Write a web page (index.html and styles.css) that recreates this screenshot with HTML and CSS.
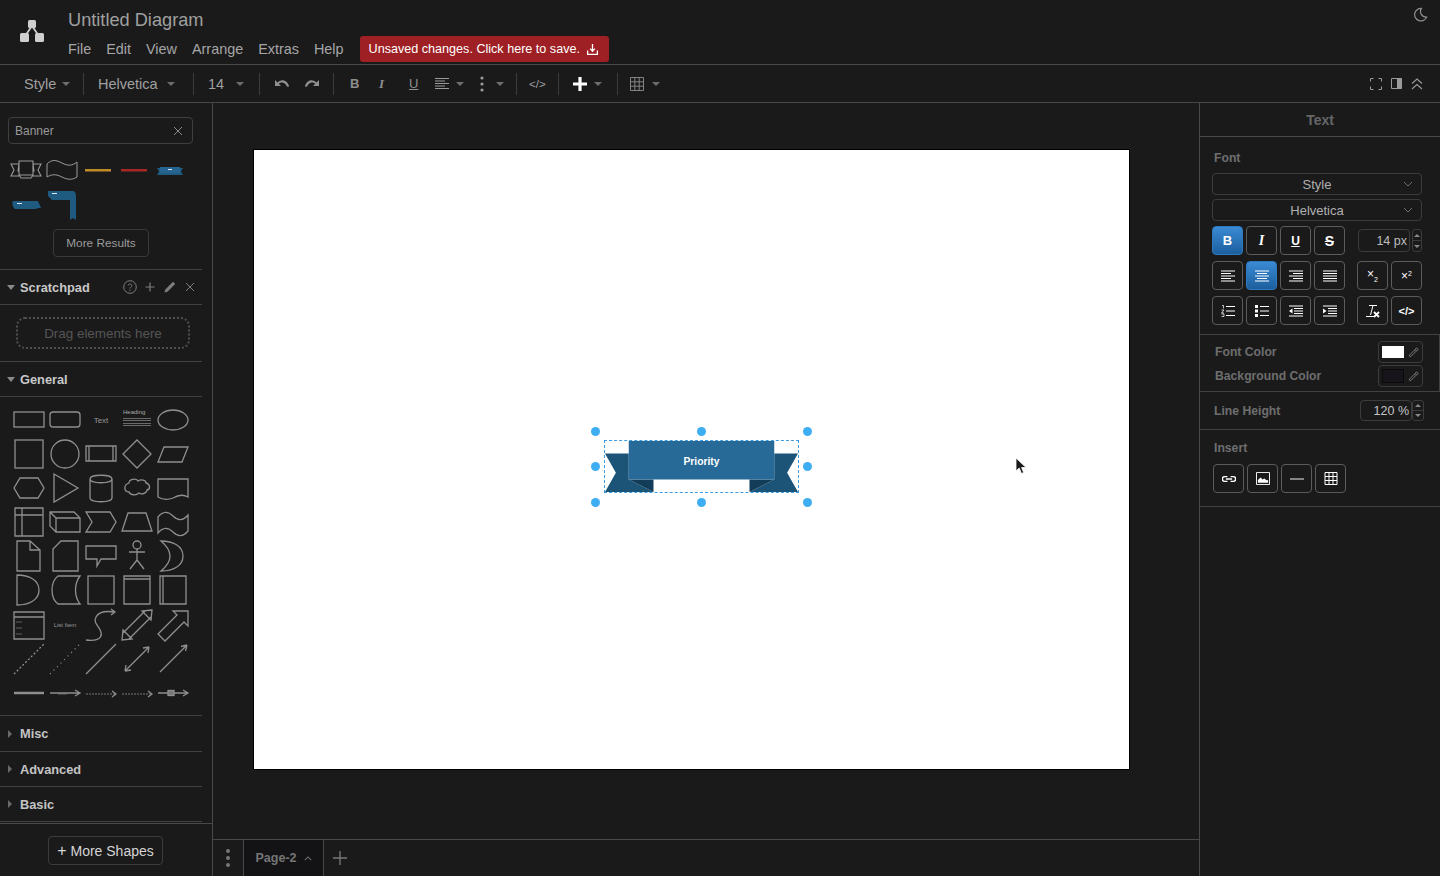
FILE: index.html
```html
<!DOCTYPE html>
<html lang="en">
<head>
<meta charset="utf-8">
<title>Untitled Diagram</title>
<link rel="stylesheet" href="styles.css">
</head>
<body>
<header class="header">
  <svg class="logo" viewBox="0 0 24 22"><path d="M12 6 5 16M12 6l7 10" stroke="#cfcfcf" stroke-width="1.800" fill="none"/><rect x="8" y="0" width="8" height="8" rx="1.500" fill="#cfcfcf"/><rect x="0" y="13" width="9" height="9" rx="1.500" fill="#cfcfcf"/><rect x="15" y="13" width="9" height="9" rx="1.500" fill="#cfcfcf"/></svg>
  <div class="head-main">
    <div class="title">Untitled Diagram</div>
    <div class="menu-row">
      <nav class="menu"><span>File</span><span>Edit</span><span>View</span><span>Arrange</span><span>Extras</span><span>Help</span></nav>
      <button class="save">Unsaved changes. Click here to save.
        <svg viewBox="0 0 12 12" class="save-ico"><path d="M6 1v6.500M3.800 5.200 6 7.600 8.200 5.200M1.500 7v3.500h9V7" fill="none" stroke="#fff" stroke-width="1.200"/></svg>
      </button>
    </div>
  </div>
  <svg class="moon" viewBox="0 0 16 16"><path d="M9 1.500a6.700 6.700 0 1 0 5.600 9.300A6 6 0 0 1 9 1.500Z" fill="none" stroke="#8d8d8d" stroke-width="1.300"/></svg>
</header>

<div class="toolbar">
  <span class="tb w-style">Style<i class="caret"></i></span><b class="sep"></b>
  <span class="tb w-font">Helvetica<i class="caret"></i></span><b class="sep"></b>
  <span class="tb w-size">14<i class="caret"></i></span><b class="sep"></b>
  <span class="tb w-undo">
    <svg class="ic" viewBox="0 0 16 16"><path d="M1 4v6h6L4.800 7.800C7.500 5.500 11 6.500 13 10.500c1 .5 1.500.5 2-.5C13.500 4.500 8 2 3.500 6.500z" fill="#8f8f8f"/></svg>
    <svg class="ic" viewBox="0 0 16 16"><path transform="matrix(-1 0 0 1 16 0)" d="M1 4v6h6L4.800 7.800C7.500 5.500 11 6.500 13 10.500c1 .5 1.500.5 2-.5C13.500 4.500 8 2 3.500 6.500z" fill="#8f8f8f"/></svg>
  </span><b class="sep"></b>
  <span class="tb w-fmt">
    <span class="f-b">B</span><span class="f-i">I</span><span class="f-u">U</span>
    <svg class="ic" viewBox="0 0 16 16"><path d="M1 2.500h14M1 5h10M1 7.500h14M1 10h10M1 12.500h14" stroke="#9a9a9a"/></svg><i class="caret c6"></i>
    <svg class="ic dots" viewBox="0 0 16 16"><circle cx="8" cy="2" r="1.600" fill="#9a9a9a"/><circle cx="8" cy="8" r="1.600" fill="#9a9a9a"/><circle cx="8" cy="14" r="1.600" fill="#9a9a9a"/></svg><i class="caret c6"></i>
  </span><b class="sep"></b>
  <span class="tb w-code">&lt;/&gt;</span><b class="sep"></b>
  <span class="tb w-add"><svg class="ic" viewBox="0 0 16 16"><path d="M8 1v14M1 8h14" stroke="#fff" stroke-width="3.200"/></svg><i class="caret"></i></span><b class="sep"></b>
  <span class="tb w-table"><svg class="ic" viewBox="0 0 14 14"><path d="M.5.500h13v13H.5zM.5 4.800h13M.5 9.200h13M4.800.5v13M9.200.5v13" fill="none" stroke="#8f8f8f" stroke-width=".9"/></svg><i class="caret c8"></i></span>
  <span class="tb-right">
    <svg class="ic13 full" viewBox="0 0 12 12"><path d="M.5 3.500V.5h3M8.500.5h3v3M11.500 8.500v3h-3M3.500 11.500h-3v-3" fill="none" stroke="#9a9a9a" stroke-width="1"/></svg>
    <svg class="ic13 split" viewBox="0 0 11 11"><path d="M.5.500h10v10H.5z" fill="none" stroke="#9a9a9a"/><rect x="6" y=".5" width="4.500" height="10" fill="#9a9a9a"/></svg>
    <svg class="ic13 coll" viewBox="0 0 12 12"><path d="M1 5.500 6 1l5 4.500M1 11l5-4.500 5 4.500" fill="none" stroke="#9a9a9a" stroke-width="1.100"/></svg>
  </span>
</div>

<div class="work">
  <aside class="side">
    <div class="side-scroll">
      <div class="search">Banner<svg class="x" viewBox="0 0 10 10"><path d="M1 1l8 8M9 1 1 9" stroke="#8a8a8a" stroke-width="1"/></svg></div>
      <div class="results">
        <svg class="res" viewBox="0 0 32 24"><path d="M1 6h8l-1 7h1v5H1l3-6zM31 6h-8l1 7h-1v5h8l-3-6zM9 3h14v14H9zM9 17l2 3h10l2-3" fill="none" stroke="#9a9a9a" stroke-width="1.100"/></svg>
        <svg class="res" viewBox="0 0 32 24"><path d="M1 6c5-5 9-4 15-1s10 3 15-1v15c-5 3-9 3-15 0s-10-3-15 0z" fill="none" stroke="#9a9a9a"/></svg>
        <svg class="res" viewBox="0 0 32 24"><rect x="3" y="11" width="26" height="2.500" fill="#c28a24"/></svg>
        <svg class="res" viewBox="0 0 32 24"><rect x="3" y="11" width="26" height="2.500" fill="#a52824"/></svg>
        <svg class="res" viewBox="0 0 32 24"><path d="M3 10h26l-2 3.500 2 3.500H3l2-3.500z" fill="#1f5a80"/><rect x="6" y="9" width="20" height="6" fill="#25658f"/><rect x="14" y="11" width="4" height="1" fill="#dfe8ee"/></svg>
        <svg class="res" viewBox="0 0 32 24"><path d="M3 9h25l3 7-3 0-2 1H6C2 17 2 9 3 9Z" fill="#1f5a80"/><rect x="7" y="11" width="5" height="1" fill="#dfe8ee"/></svg>
        <svg class="res tall" viewBox="0 0 32 32"><path d="M2 1h24c3 0 4 2 4 5v24l-3-2-3 2V10H6L2 6Z" fill="#1f5a80"/><rect x="6" y="3" width="5" height="1" fill="#dfe8ee"/></svg>
      </div>
      <button class="more-res">More Results</button>
      <div class="sec sec-open"><i class="tri"></i>Scratchpad
        <span class="sec-ic">
          <svg viewBox="0 0 14 14"><circle cx="7" cy="7" r="6.300" fill="none" stroke="#7d7d7d"/><path d="M5.200 5.500C5.200 3.500 8.800 3.500 8.800 5.500 8.800 7 7 7 7 8.500M7 9.800v1.200" fill="none" stroke="#7d7d7d"/></svg>
          <svg viewBox="0 0 14 14"><path d="M7 2.500v9M2.500 7h9" stroke="#7d7d7d" stroke-width="1.200"/></svg>
          <svg viewBox="0 0 14 14"><path d="M1.500 12.500l.8-3L10 1.800l2.200 2.200-7.700 7.700z" fill="#7d7d7d"/></svg>
          <svg viewBox="0 0 14 14"><path d="M3 3l8 8M11 3l-8 8" stroke="#7d7d7d"/></svg>
        </span>
      </div>
      <div class="drop-wrap"><div class="drop">Drag elements here</div></div>
      <div class="sec sec-open sec-general"><i class="tri"></i>General</div>
      <div class="shapes">
        <svg viewBox="0 0 36 36"><rect x="3" y="10" width="30" height="15"/></svg>
        <svg viewBox="0 0 36 36"><rect x="3" y="10" width="30" height="15" rx="3"/></svg>
        <span class="t-text">Text</span>
        <span class="t-head"><b>Heading</b><i></i><i></i><i></i><i></i></span>
        <svg viewBox="0 0 36 36"><ellipse cx="18" cy="18" rx="15" ry="10"/></svg>

        <svg viewBox="0 0 36 36"><rect x="4" y="4" width="28" height="28"/></svg>
        <svg viewBox="0 0 36 36"><circle cx="18" cy="18" r="14"/></svg>
        <svg viewBox="0 0 36 36"><path d="M3 10h30v15H3zM6 10v15M30 10v15"/></svg>
        <svg viewBox="0 0 36 36"><path d="M18 4l14 14-14 14L4 18z"/></svg>
        <svg viewBox="0 0 36 36"><path d="M9 11h24l-6 15H3z"/></svg>

        <svg viewBox="0 0 36 36"><path d="M9 8h18l6 10-6 10H9L3 18z"/></svg>
        <svg viewBox="0 0 36 36"><path d="M7 4l24 14L7 32z"/></svg>
        <svg viewBox="0 0 36 36"><path d="M7 9v19c0 5 22 5 22 0V9c0-5-22-5-22 0 0 5 22 5 22 0"/></svg>
        <svg viewBox="0 0 36 36"><path d="M10 13c0-4 7-5 9-2 3-2 8-1 8 2 4 1 5 6 1 7 0 3-5 5-8 3-3 3-9 2-10-1-5 0-6-7 0-9z"/></svg>
        <svg viewBox="0 0 36 36"><path d="M3 9h30v18c-5-3-10-2-15 1-5 2-10 2-15-1z"/></svg>

        <svg viewBox="0 0 36 36"><path d="M4 4h28v28H4zM4 11h28M11 4v28"/></svg>
        <svg viewBox="0 0 36 36"><path d="M3 8h24l6 6v14H9l-6-6zM3 8l6 6h24M9 14v14"/></svg>
        <svg viewBox="0 0 36 36"><path d="M3 8h24l6 10-6 10H3l6-10z"/></svg>
        <svg viewBox="0 0 36 36"><path d="M9 9h18l6 18H3z"/></svg>
        <svg viewBox="0 0 36 36"><path d="M3 13c5-6 10-6 15-1s10 5 15-1v16c-5 6-10 6-15 1S8 23 3 29z"/></svg>

        <svg viewBox="0 0 36 36"><path d="M6 3h13l10 9v21H6zM19 3v9h10"/></svg>
        <svg viewBox="0 0 36 36"><path d="M14 3h17v30H6V11z"/></svg>
        <svg viewBox="0 0 36 36"><path d="M3 8h30v13H18l-4 7v-7H3z"/></svg>
        <svg viewBox="0 0 36 36"><circle cx="18" cy="7" r="4"/><path d="M18 11v11M10 14h16M18 22l-7 9M18 22l7 9"/></svg>
        <svg viewBox="0 0 36 36"><path d="M6 3c12 0 22 5 22 15S18 33 6 33c6-5 9-10 9-15S12 8 6 3z"/></svg>

        <svg viewBox="0 0 36 36"><path d="M6 3c12 0 22 5 22 15S18 33 6 33z"/></svg>
        <svg viewBox="0 0 36 36"><path d="M11 4h22c-6 8-6 20 0 28H11C3 26 3 10 11 4z"/></svg>
        <svg viewBox="0 0 36 36"><rect x="5" y="4" width="26" height="28"/></svg>
        <svg viewBox="0 0 36 36"><path d="M5 4h26v28H5zM5 7h26"/></svg>
        <svg viewBox="0 0 36 36"><path d="M5 4h26v28H5zM8 4v28"/></svg>

        <svg viewBox="0 0 36 36"><path d="M3 5h30v27H3zM3 10h30"/><path class="fine" d="M5 15h6M5 21h6M5 27h6"/></svg>
        <span class="t-list">List Item</span>
        <svg viewBox="0 0 36 36"><path d="M3 33c8 1 17 0 15-8-2-6-8-9-5-15 3-6 12-6 19-5M28 2l4 3-4 3"/></svg>
        <svg viewBox="0 0 36 36"><path d="M4 26 26 4M10 32 32 10M3 33l1-10 9 9zM33 3l-10 1 9 9z"/></svg>
        <svg viewBox="0 0 36 36"><path d="M3 27 22 8l-4-4h15v15l-4-4L10 34z"/></svg>

        <svg viewBox="0 0 36 36"><path class="dash" d="M3 33 33 3"/></svg>
        <svg viewBox="0 0 36 36"><path class="dot" d="M3 33 33 3"/></svg>
        <svg viewBox="0 0 36 36"><path d="M3 33 33 3"/></svg>
        <svg viewBox="0 0 36 36"><path d="M6 30 30 6M30 6l-6 1M30 6l-1 6M6 30l6-1M6 30l1-6"/></svg>
        <svg viewBox="0 0 36 36"><path d="M5 31 32 4M32 4l-6 1.500M32 4l-1.500 6"/></svg>

        <svg viewBox="0 0 36 36"><path class="thick" d="M3 18h30"/></svg>
        <svg viewBox="0 0 36 36"><path d="M3 18h29M28 15l5 3-5 3"/><path class="fine" d="M11 19h9"/></svg>
        <svg viewBox="0 0 36 36"><path class="fine2" d="M3 19h29"/><path d="M29 16l4 3-4 3"/></svg>
        <svg viewBox="0 0 36 36"><path class="fine2" d="M3 19h29"/><path d="M29 16l4 3-4 3"/></svg>
        <svg viewBox="0 0 36 36"><path d="M3 18h29M28 15l5 3-5 3"/><rect class="fill" x="13" y="15.500" width="6" height="5"/></svg>
      </div>
      <div class="sec sec-closed sec-misc"><i class="tri-r"></i>Misc</div>
      <div class="sec sec-closed"><i class="tri-r"></i>Advanced</div>
      <div class="sec sec-closed"><i class="tri-r"></i>Basic</div>
    </div>
    <div class="side-foot"><button class="more-shapes"><span class="plus">+</span> More Shapes</button></div>
  </aside>

  <main class="stage">
    <div class="canvas-area">
      <div class="paper">
        <div class="sel">
          <div class="banner">
            <svg class="ban-svg" viewBox="0 0 195 53" preserveAspectRatio="none">
              <path d="M0 13h24v27l25 13H0l11-20z" fill="#1c5478"/>
              <path d="M195 13h-24v27l-25 13h49l-11-20z" fill="#1c5478"/>
              <path d="M24 40h25v13z" fill="#123c58"/>
              <path d="M171 40h-25v13z" fill="#123c58"/>
              <rect x="24" y="0" width="147" height="40" fill="#286a97"/>
            </svg>
            <span class="ban-text">Priority</span>
          </div>
          <i class="h h1"></i><i class="h h2"></i><i class="h h3"></i><i class="h h4"></i><i class="h h5"></i><i class="h h6"></i><i class="h h7"></i><i class="h h8"></i>
        </div>
        <svg class="cursor" viewBox="0 0 14 18"><path d="M2 1v13l3.200-3 2.300 5.500 2.200-1L7.500 10.500H12z" fill="#1a1a1a" stroke="#fff" stroke-width=".8"/></svg>
      </div>
    </div>
    <div class="pagebar">
      <span class="pb-opt"><svg viewBox="0 0 6 20" class="pb-dots"><circle cx="3" cy="3" r="2" fill="#777"/><circle cx="3" cy="10" r="2" fill="#777"/><circle cx="3" cy="17" r="2" fill="#777"/></svg></span>
      <span class="pb-page">Page-2 <svg viewBox="0 0 10 6" class="pb-car"><path d="M1 5l4-4 4 4" fill="none" stroke="#6f6f6f" stroke-width="1.300"/></svg></span>
      <span class="pb-add"><svg viewBox="0 0 14 14"><path d="M7 0v14M0 7h14" stroke="#7a7a7a" stroke-width="1.300"/></svg></span>
    </div>
  </main>

  <aside class="panel">
    <div class="panel-tab">Text</div>
    <div class="pn-sec pn-font">
      <div class="pn-label">Font</div>
      <div class="sel-box">Style<svg viewBox="0 0 10 6" class="chev"><path d="M1 1l4 4 4-4" fill="none" stroke="#6e6e6e"/></svg></div>
      <div class="sel-box">Helvetica<svg viewBox="0 0 10 6" class="chev"><path d="M1 1l4 4 4-4" fill="none" stroke="#6e6e6e"/></svg></div>
      <div class="btn-row">
        <div class="btn-group">
          <span class="bt on"><b class="g-b">B</b></span>
          <span class="bt"><i class="g-i">I</i></span>
          <span class="bt"><span class="g-u">U</span></span>
          <span class="bt"><span class="g-s">S</span></span>
        </div>
        <div class="spin-wrap spin-a"><span class="spin">14 px</span><span class="spin-btns"><i class="up"></i><i class="dn"></i></span></div>
      </div>
      <div class="btn-row">
        <div class="btn-group">
          <span class="bt"><svg viewBox="0 0 14 12"><path d="M0 1h14M0 3.500h10M0 6h14M0 8.500h10M0 11h14" stroke="#fff"/></svg></span>
          <span class="bt on"><svg viewBox="0 0 14 12"><path d="M0 1h14M2 3.500h10M0 6h14M2 8.500h10M0 11h14" stroke="#fff"/></svg></span>
          <span class="bt"><svg viewBox="0 0 14 12"><path d="M0 1h14M4 3.500h10M0 6h14M4 8.500h10M0 11h14" stroke="#fff"/></svg></span>
          <span class="bt"><svg viewBox="0 0 14 12"><path d="M0 1h14M0 3.500h14M0 6h14M0 8.500h14M0 11h14" stroke="#fff"/></svg></span>
        </div>
        <div class="btn-group">
          <span class="bt"><span class="g-sub">×<small>2</small></span></span>
          <span class="bt"><span class="g-sub">×<sup>2</sup></span></span>
        </div>
      </div>
      <div class="btn-row">
        <div class="btn-group">
          <span class="bt"><svg viewBox="0 0 14 12"><path d="M5 1.500h9M5 6h9M5 10.500h9" stroke="#fff"/><path d="M1 .5h1.500v3M.5 5h2.500L.5 8h2.500M.5 9h2.500v2.500H.5" fill="none" stroke="#fff" stroke-width=".7"/></svg></span>
          <span class="bt"><svg viewBox="0 0 14 12"><path d="M5 1.500h9M5 6h9M5 10.500h9" stroke="#fff"/><path d="M0 0h3v3H0zM0 4.500h3v3H0zM0 9h3v3H0z" fill="#fff"/></svg></span>
          <span class="bt"><svg viewBox="0 0 14 12"><path d="M0 1h14M5 3.500h9M5 6h9M5 8.500h9M0 11h14" stroke="#fff"/><path d="M3.500 3.500v5L0 6z" fill="#fff"/></svg></span>
          <span class="bt"><svg viewBox="0 0 14 12"><path d="M0 1h14M5 3.500h9M5 6h9M5 8.500h9M0 11h14" stroke="#fff"/><path d="M0 3.500v5L3.500 6z" fill="#fff"/></svg></span>
        </div>
        <div class="btn-group">
          <span class="bt"><svg class="clear" viewBox="0 0 16 14"><path d="M4 1.500h8M8 1.500 5.500 11M1 12.500h8" stroke="#fff" fill="none"/><path d="M9 8l5 5M14 8l-5 5" stroke="#fff" stroke-width="1.800"/></svg></span>
          <span class="bt g-code">&lt;/&gt;</span>
        </div>
      </div>
    </div>
    <div class="pn-sec pn-color">
      <div class="color-row"><span>Font Color</span><span class="swatch"><i class="sw-w"></i><svg viewBox="0 0 12 12"><path d="M2 10.500 1.500 9 7 3.500 8.500 5 3 10.500zM7.500 2.500l2-1.500 1.500 1.500-1.500 2z" fill="none" stroke="#9a9a9a" stroke-width=".8"/></svg></span></div>
      <div class="color-row"><span>Background Color</span><span class="swatch"><i class="sw-d"></i><svg viewBox="0 0 12 12"><path d="M2 10.500 1.500 9 7 3.500 8.500 5 3 10.500zM7.500 2.500l2-1.500 1.500 1.500-1.500 2z" fill="none" stroke="#9a9a9a" stroke-width=".8"/></svg></span></div>
    </div>
    <div class="pn-sec pn-line">
      <span class="pn-label">Line Height</span>
      <div class="spin-wrap spin-b"><span class="spin">120 %</span><span class="spin-btns"><i class="up"></i><i class="dn"></i></span></div>
    </div>
    <div class="pn-sec pn-insert">
      <div class="pn-label">Insert</div>
      <div class="btn-group ins">
        <span class="bt"><svg viewBox="0 0 18 10"><path d="M7 2H3.500a3 3 0 0 0 0 6H7M11 2h3.500a3 3 0 0 1 0 6H11M5 5h8" fill="none" stroke="#fff" stroke-width="1.800"/></svg></span>
        <span class="bt"><svg class="pic" viewBox="0 0 15 14"><path d="M.5.500h14v13H.5z" fill="none" stroke="#fff"/><path d="M2 11.500v-3L5 6l2 2 2-1 2 1.500 2 .5v2.500z" fill="#fff"/></svg></span>
        <span class="bt"><svg viewBox="0 0 15 2" class="hr"><path d="M0 1h15" stroke="#fff"/></svg></span>
        <span class="bt"><svg class="pic" viewBox="0 0 13 13"><path d="M.5.500h12v12H.5zM.5 4.500h12M.5 8.500h12M4.500.5v12M8.500.5v12" fill="none" stroke="#fff"/></svg></span>
      </div>
    </div>
  </aside>
</div>
</body>
</html>
```
FILE: styles.css
```css
* { box-sizing: border-box; }
html, body { margin: 0; height: 100%; }
body {
  width: 1440px; height: 876px; overflow: hidden;
  background: #1a1a1b; color: #a8a8a8;
  font-family: "Liberation Sans", Arial, sans-serif; font-size: 13px;
  display: flex; flex-direction: column;
}
button { font-family: inherit; }

.header { height: 65px; border-bottom: 1px solid #484848; display: flex; flex: none; }
.logo { width: 24px; height: 22px; margin: 20px 0 0 20px; flex: none; }
.head-main { margin-left: 24px; flex: 1; }
.title { font-size: 18.200px; color: #a0a0a0; padding-top: 9px; line-height: 22px; }
.menu-row { display: flex; align-items: center; margin-top: 5px; }
.menu { display: flex; gap: 15px; font-size: 14.400px; color: #a6a6a6; }
.save {
  margin-left: 16px; height: 26px; width: 249px; padding: 0 0 0 9px; flex: none;
  background: #9e1f24; color: #fff; border: 0; border-radius: 3px;
  font-size: 12.600px; display: flex; align-items: center; gap: 6px; white-space: nowrap;
}
.save-ico { width: 13px; height: 13px; }
.moon { width: 15px; height: 15px; margin: 7px 12px 0 0; flex: none; }

.toolbar { height: 38px; flex: none; border-bottom: 1px solid #484848; display: flex; align-items: center; padding-left: 24px; color: #a0a0a0; font-size: 14.500px; }
.tb { display: flex; align-items: center; }
.sep { width: 1px; height: 22px; background: #3c3c3c; flex: none; }
.caret { width: 0; height: 0; border: 4px solid transparent; border-top: 4px solid #6d6d6d; border-bottom: 0; margin-left: 6px; flex: none; }
.c6 { margin-left: 6px; }
.c8 { margin-left: 8px; }
.ic { width: 16px; height: 16px; flex: none; }
.w-style { width: 59px; }
.w-font { width: 109px; padding-left: 14px; }
.w-font .caret { margin-left: 9px; }
.w-size { width: 65px; padding-left: 14px; }
.w-size .caret { margin-left: 12px; }
.w-undo { width: 73px; padding-left: 14px; gap: 14px; }
.w-fmt { width: 182px; padding-left: 16px; font-size: 13px; color: #8e8e8e; }
.f-b { font-weight: bold; width: 29px; }
.f-i { font-family: "Liberation Serif", serif; font-style: italic; font-weight: bold; width: 30px; }
.f-u { text-decoration: underline; width: 25px; }
.dots { margin-left: 10px; }
.w-code { width: 41px; padding-left: 12px; font-size: 11.500px; }
.w-add { width: 58px; padding-left: 13px; }
.w-add .caret { margin-left: 6px; }
.w-table { padding-left: 12px; }
.w-table .ic { width: 14px; height: 14px; }
.tb-right { margin-left: auto; display: flex; align-items: center; margin-right: 17px; }
.full { width: 12px; height: 12px; }
.split { width: 11px; height: 11px; margin-left: 9px; }
.coll { width: 12px; height: 12px; margin-left: 9px; }

.work { flex: 1; display: flex; min-height: 0; }
.side { width: 213px; flex: none; border-right: 1px solid #484848; display: flex; flex-direction: column; }
.side-scroll { flex: 1; width: 202px; min-height: 0; }
.search {
  margin: 14px 0 0 8px; width: 185px; height: 27px; border: 1px solid #3f3f3f; border-radius: 4px;
  padding: 0 6px; display: flex; align-items: center; justify-content: space-between; font-size: 12px; color: #999;
}
.x { width: 10px; height: 10px; margin-right: 3px; }
.results { display: grid; grid-template-columns: repeat(5, 32px); column-gap: 4px; row-gap: 10px; grid-auto-rows: 24px; margin: 14px 0 0 10px; height: 71px; }
.res { width: 32px; height: 24px; }
.res.tall { height: 32px; margin-top: -2px; }
.more-res { display: block; margin: 0 0 0 53px; width: 96px; height: 28px; border: 1px solid #3a3a3a; border-radius: 4px; background: none; color: #9a9a9a; font-size: 11.800px; padding: 0; }
.sec { display: flex; align-items: center; border-bottom: 1px solid #414141; font-weight: bold; color: #c8c8c8; font-size: 12.800px; padding-left: 7px; }
.sec-open { border-top: 1px solid #414141; margin-top: 12px; height: 36px; }
.sec-general { margin-top: 0; }
.tri { width: 0; height: 0; border: 4px solid transparent; border-top: 5px solid #8a8a8a; border-bottom: 0; margin-right: 5px; }
.tri-r { width: 0; height: 0; border: 4px solid transparent; border-left: 4px solid #6a6a6a; border-right: 0; margin: 0 8px 0 1px; }
.sec-ic { margin-left: auto; display: flex; gap: 6px; margin-right: 5px; }
.sec-ic svg { width: 14px; height: 14px; }
.drop-wrap { height: 56px; padding: 12px 0 0 16px; }
.drop { width: 174px; height: 32px; border: 2px dotted #505050; border-radius: 9px; display: flex; align-items: center; justify-content: center; color: #555; font-size: 13.400px; }

.shapes { display: grid; grid-template-columns: repeat(5, 36px); grid-auto-rows: 34.100px; padding: 6px 0 0 11px; height: 319px; border-bottom: 1px solid #414141; }
.shapes svg { width: 36px; height: 36px; margin: -1px 0; fill: none; stroke: #8f8f8f; stroke-width: 1.300; }
.shapes .dash { stroke-dasharray: 2 2; }
.shapes .dot { stroke-dasharray: 1 4; }
.shapes .thick { stroke-width: 2.500; }
.shapes .fine { stroke-width: .6; }
.shapes .fine2 { stroke-width: .8; stroke-dasharray: 2 1; }
.shapes .fill { fill: #777; }
.t-text { font-size: 8px; color: #999; display: flex; align-items: center; justify-content: center; }
.t-list { font-size: 6px; color: #999; display: flex; align-items: center; justify-content: center; }
.t-head { display: flex; flex-direction: column; gap: 1.500px; padding: 6px 4px 0 4px; }
.t-head b { font-size: 6px; line-height: 7px; font-weight: normal; color: #aaa; }
.t-head i { display: block; height: 1px; background: #6a6a6a; }
.sec-closed { color: #c4c4c4; height: 35px; }
.sec-misc { height: 36px; }
.side-foot { height: 53px; flex: none; border-top: 1px solid #484848; padding: 12px 0 0 48px; }
.more-shapes { width: 115px; height: 29px; background: none; border: 1px solid #3c3c3c; border-radius: 4px; color: #d4d4d4; font-size: 14px; padding: 0; }
.plus { font-size: 16px; }

.stage { flex: 1; min-width: 0; display: flex; flex-direction: column; border-right: 1px solid #484848; }
.canvas-area { flex: 1; min-height: 0; padding: 46px 0 0 40px; }
.paper { width: 877px; height: 621px; background: #fff; position: relative; border: 1px solid #000; }
.sel { position: absolute; left: 350px; top: 290px; width: 195px; height: 53px; border: 1px dashed #3d9be0; }
.banner { position: relative; width: 100%; height: 100%; }
.ban-svg { display: block; width: 100%; height: 100%; }
.ban-text { position: absolute; left: 24px; right: 24px; top: 0; height: 40px; display: flex; align-items: center; justify-content: center; color: #fff; font-weight: bold; font-size: 10.300px; }
.h { position: absolute; width: 9px; height: 9px; border-radius: 50%; background: #3eaef3; }
.h1 { left: -14px; top: -14px; }
.h2 { left: 92px; top: -14px; }
.h3 { left: 198px; top: -14px; }
.h4 { left: -14px; top: 21px; }
.h5 { left: 198px; top: 21px; }
.h6 { left: -14px; top: 57px; }
.h7 { left: 92px; top: 57px; }
.h8 { left: 198px; top: 57px; }
.cursor { position: absolute; left: 760px; top: 307px; width: 14px; height: 18px; }

.pagebar { height: 37px; flex: none; border-top: 1px solid #484848; display: flex; }
.pb-opt { width: 31px; border-right: 1px solid #484848; display: flex; align-items: center; justify-content: center; }
.pb-dots { width: 6px; height: 20px; }
.pb-page { width: 80px; background: #131315; border-right: 1px solid #484848; display: flex; align-items: center; justify-content: center; gap: 7px; color: #757575; font-size: 12.500px; font-weight: bold; }
.pb-car { width: 8px; height: 5px; }
.pb-add { width: 31px; display: flex; align-items: center; justify-content: center; }
.pb-add svg { width: 14px; height: 14px; }

.panel { width: 240px; flex: none; }
.panel-tab { height: 34px; border-bottom: 1px solid #484848; display: flex; align-items: center; justify-content: center; color: #666; font-weight: bold; font-size: 14px; }
.pn-sec { border-bottom: 1px solid #424242; padding-left: 12px; }
.pn-label { color: #6e6e6e; font-weight: bold; font-size: 12.200px; padding-left: 2px; }
.pn-font { height: 198px; padding-top: 13px; }
.pn-font .pn-label { margin-bottom: 7px; line-height: 16px; }
.sel-box { position: relative; width: 210px; height: 22px; margin-bottom: 4px; border: 1px solid #3c3c3c; border-radius: 4px; display: flex; align-items: center; justify-content: center; color: #b0b0b0; font-size: 13px; }
.sel-box + .btn-row { margin-top: 5px; }
.chev { position: absolute; right: 8px; top: 7px; width: 10px; height: 6px; }
.btn-row { display: flex; justify-content: space-between; width: 210px; margin-bottom: 6px; }
.btn-group { display: flex; gap: 3px; }
.bt { width: 31px; height: 29px; border: 1px solid #5c5c5c; border-radius: 4px; display: flex; align-items: center; justify-content: center; color: #fff; font-size: 13px; }
.bt svg { width: 14px; height: 12px; }
.bt .clear { width: 16px; height: 14px; }
.bt.on { background: linear-gradient(#3a8ad4, #1c5f9e); border-color: #2e78bd; }
.g-i { font-family: "Liberation Serif", serif; font-weight: bold; font-size: 14px; }
.g-u { text-decoration: underline; font-weight: bold; font-size: 12px; }
.g-s { text-decoration: line-through; font-weight: bold; font-size: 14px; }
.g-sub { font-size: 12px; line-height: 1; }
.g-sub small { font-size: 7px; vertical-align: -4px; }
.g-sub sup { font-size: 7px; vertical-align: 4px; line-height: 0; }
.g-code { font-size: 11px; font-weight: bold; }
.spin-wrap { display: flex; align-items: center; }
.spin { width: 52px; height: 23px; border: 1px solid #3c3c3c; border-radius: 4px; display: flex; align-items: center; justify-content: flex-end; padding-right: 2px; color: #bdbdbd; font-size: 12.500px; }
.spin-a { gap: 2px; }
.spin-b .spin { color: #c4c4c4; height: 21px; }
.spin-btns { width: 10px; display: flex; flex-direction: column; border: 1px solid #3c3c3c; border-radius: 3px; height: 23px; }
.spin-b .spin-btns { width: 12px; height: 21px; }
.spin-btns i { flex: 1; display: flex; align-items: center; justify-content: center; }
.up::before { content: ""; border: 3px solid transparent; border-bottom: 3px solid #8a8a8a; border-top: 0; }
.dn { border-top: 1px solid #3c3c3c; }
.dn::before { content: ""; border: 3px solid transparent; border-top: 3px solid #8a8a8a; border-bottom: 0; }
.pn-color { height: 57px; padding: 6px 17px 0 15px; border-right: 1px solid #424242; }
.color-row { display: flex; justify-content: space-between; align-items: flex-start; height: 24px; color: #6e6e6e; font-weight: bold; font-size: 12.200px; line-height: 22px; margin-right: -1px; }
.swatch { width: 45px; height: 22px; border: 1px solid #3c3c3c; border-radius: 4px; display: flex; align-items: center; padding-left: 3px; gap: 4px; }
.swatch svg { width: 11px; height: 11px; }
.sw-w { width: 22px; height: 12px; background: #fff; }
.sw-d { width: 22px; height: 14px; background: #17151a; border: 1px solid #0a0a0a; }
.pn-line { height: 38px; display: flex; justify-content: space-between; align-items: center; padding-right: 16px; }
.pn-insert { height: 77px; padding-top: 10px; }
.pn-insert .pn-label { line-height: 16px; margin-bottom: 8px; }
.ins { padding-left: 1px; }
.bt .hr { height: 2px; }
.bt .pic { width: 14px; height: 13px; }
```
